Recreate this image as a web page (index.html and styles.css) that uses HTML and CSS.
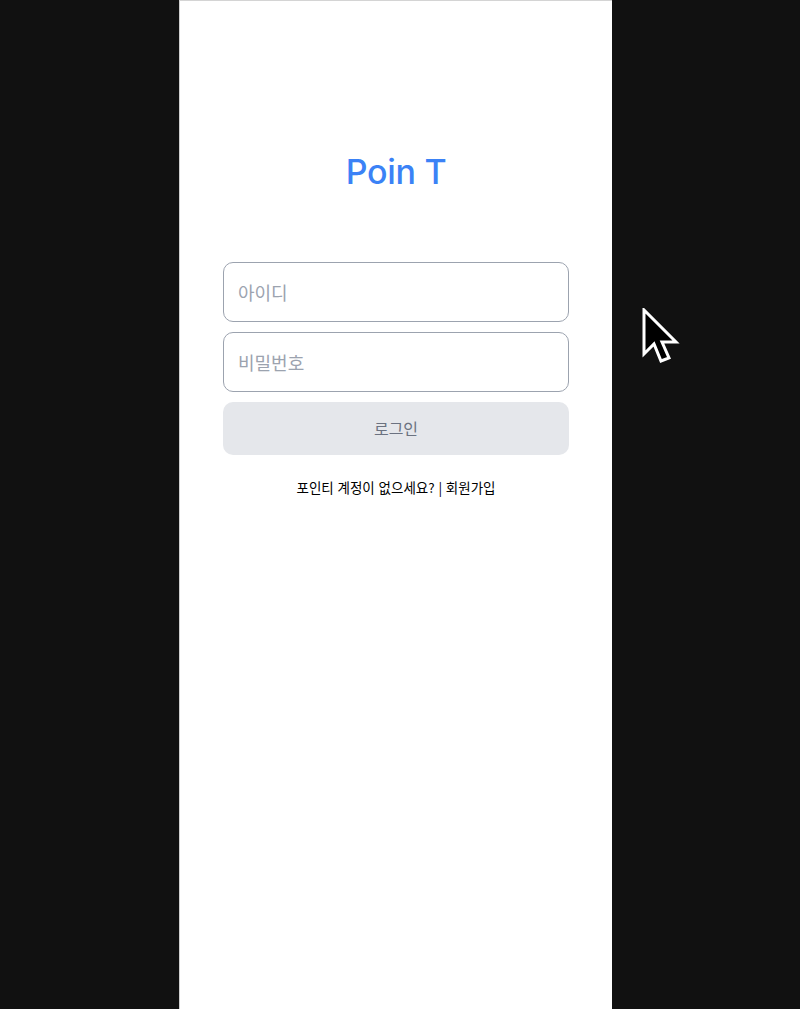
FILE: index.html
```html
<!DOCTYPE html>
<html lang="ko">
<head>
<meta charset="utf-8">
<link rel="stylesheet" href="styles.css">
</head>
<body>
<div class="stage">
  <main class="panel">
    <h1 class="logo">Poin T</h1>
    <form class="form">
      <input class="field" type="text" placeholder="아이디">
      <input class="field" type="password" placeholder="비밀번호">
      <button class="submit" type="button">로그인</button>
    </form>
    <p class="signup">포인티 계정이 없으세요? | 회원가입</p>
  </main>
</div>
<svg class="cursor" width="40" height="60" viewBox="0 0 40 60" xmlns="http://www.w3.org/2000/svg">
  <path d="M2 2 L2 46 L12 36 L19 53 L27 50 L20 34 L34 34 Z" fill="#000" stroke="#fff" stroke-width="3" stroke-linejoin="miter"/>
</svg>
</body>
</html>
```
FILE: styles.css
```css
* { box-sizing: border-box; }
html, body { margin: 0; padding: 0; }
body {
  background: #111111;
  font-family: Inter, "Noto Sans CJK KR", sans-serif;
  height: 1009px;
  overflow: hidden;
}
.stage {
  display: flex;
  justify-content: flex-start;
  padding-left: 179px;
  height: 1009px;
}
.panel {
  width: 433px;
  height: 1009px;
  background: #ffffff;
  border-top: 1px solid #d4d4d4;
  border-left: 1px solid #cfcfcf;
  padding: 149px 43px 0 43px;
  display: flex;
  flex-direction: column;
  align-items: stretch;
}
.logo {
  margin: 0;
  text-align: center;
  font-size: 34px;
  line-height: 44px;
  font-weight: 500;
  color: #3b82f6;
  letter-spacing: -0.3px;
}
.form {
  margin-top: 68px;
  display: flex;
  flex-direction: column;
  gap: 10px;
}
.field {
  height: 60px;
  border: 1px solid #9ca3af;
  border-radius: 10px;
  padding: 0 14px;
  font-family: "Noto Sans CJK KR", sans-serif;
  font-size: 18px;
  color: #111;
  background: #fff;
  outline: none;
}
.field::placeholder { color: #9ca3af; }
.submit {
  height: 53px;
  border: none;
  border-radius: 10px;
  background: #e5e7eb;
  color: #6b7280;
  font-family: "Noto Sans CJK KR", sans-serif;
  font-size: 16px;
  padding-bottom: 2px;
}
.signup {
  margin: 22px 0 0 0;
  text-align: center;
  font-family: "Noto Sans CJK KR", sans-serif;
  font-size: 13.5px;
  line-height: 20px;
  color: #000;
}
.cursor {
  position: absolute;
  left: 642px;
  top: 308px;
}
```
